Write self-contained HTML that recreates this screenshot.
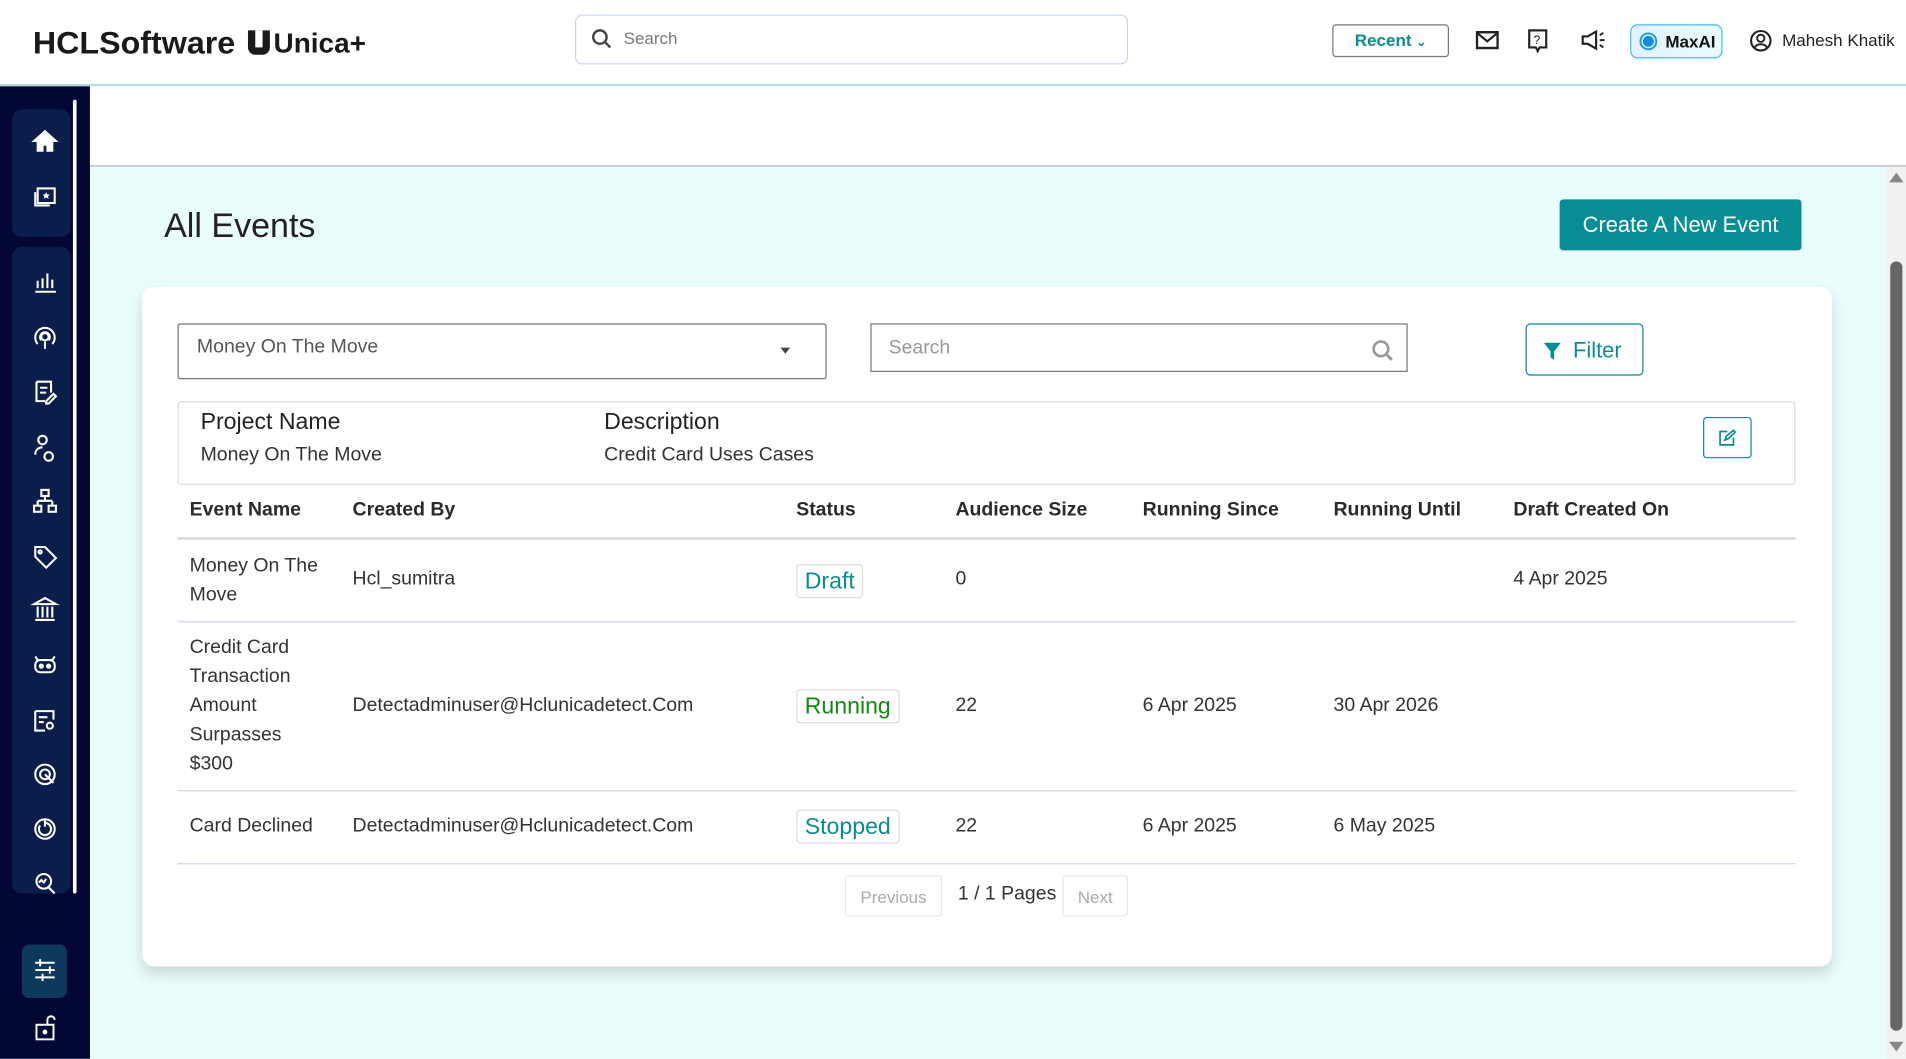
<!DOCTYPE html>
<html><head><meta charset="utf-8"><style>
*{box-sizing:border-box;margin:0;padding:0}
html,body{width:1906px;height:1059px;overflow:hidden;background:#e9fdfd;font-family:"Liberation Sans",sans-serif;color:#2b2b2b}
#w{position:absolute;left:0;top:0;width:1568px;height:871px;transform:scale(1.2156);transform-origin:0 0;background:#e9fdfd}
.a{position:absolute}
.hdr{left:0;top:0;width:1568px;height:71px;background:#fff;border-bottom:2px solid #b5dde0}
.side{left:0;top:71px;width:74px;height:800px;background:#020733}
.grp{background:#0b1d4a;border-radius:8px}
.th{position:absolute;top:411px;font-size:16px;font-weight:bold;color:#2a2a2a}
.td{position:absolute;font-size:16px;color:#333;line-height:24px}
.badge{position:absolute;border:1px solid #ddd;border-radius:3px;font-size:19px;padding:0 6px;height:28px;line-height:27px}
</style></head><body><div id="w">
<div class="a hdr"></div>
<div class="a" style="left:27px;top:20px;font-size:26px;font-weight:bold;letter-spacing:0;color:#1a1a1a;transform:scaleX(1.02);transform-origin:0 0">HCLSoftware</div>
<div class="a" style="left:204px;top:25px;width:18px;height:20px;border:3px solid #1a1a1a;border-radius:0 0 6px 6px;background:#1a1a1a"><div style="position:absolute;left:3px;top:-3px;width:6px;height:14px;background:#fff"></div></div>
<div class="a" style="left:225px;top:22px;font-size:23px;font-weight:bold;color:#1a1a1a">Unica+</div>
<div class="a" style="left:473px;top:12px;width:455px;height:41px;border:1px solid #c9d6ea;border-radius:6px"></div>
<svg class="a" style="left:486px;top:23px" width="18" height="18" viewBox="0 0 18 18"><circle cx="7.5" cy="7.5" r="5.5" fill="none" stroke="#444" stroke-width="2"/><path d="M11.5 11.5L16 16" stroke="#444" stroke-width="2"/></svg>
<div class="a" style="left:513px;top:23px;font-size:14px;color:#777">Search</div>
<div class="a" style="left:1096px;top:20px;width:96px;height:27px;border:1px solid #777;border-radius:3px;color:#078d94;font-weight:bold;font-size:14px;text-align:center;line-height:25px">Recent <span style="font-size:10px">&#8964;</span></div>
<svg class="a" style="left:1214px;top:25px" width="19" height="16"><rect x="1" y="1.5" width="17" height="13" fill="none" stroke="#222" stroke-width="2"/><path d="M1 2l8.5 7 8.5-7" fill="none" stroke="#222" stroke-width="1.8"/></svg>
<svg class="a" style="left:1257px;top:24px" width="16" height="20"><path d="M1 1h14v14H9.5L8 18 6.5 15H1z" fill="none" stroke="#222" stroke-width="1.8"/><text x="4.5" y="12" font-size="10" font-family="Liberation Sans" fill="#222">?</text></svg>
<svg class="a" style="left:1300px;top:24px" width="24" height="18"><path d="M2 6h4l7-4v14l-7-4H2z" fill="none" stroke="#222" stroke-width="1.8"/><path d="M16 5l3-2M16 9h4M16 13l3 2" stroke="#222" stroke-width="1.6"/></svg>
<div class="a" style="left:1341px;top:20px;width:76px;height:28px;border:1.5px solid #3bc0e8;border-radius:6px;background:linear-gradient(90deg,#e2f1ff,#eafcff)"></div>
<svg class="a" style="left:1348px;top:26px" width="16" height="16"><circle cx="8" cy="8" r="6.5" fill="none" stroke="#1a9be0" stroke-width="1.6"/><circle cx="8" cy="8" r="4.5" fill="#0a8fe0"/></svg>
<div class="a" style="left:1370px;top:26px;font-size:14px;font-weight:bold;color:#111">MaxAI</div>
<svg class="a" style="left:1439px;top:24px" width="19" height="19"><circle cx="9.5" cy="9.5" r="8" fill="none" stroke="#222" stroke-width="1.7"/><circle cx="9.5" cy="7.5" r="3" fill="none" stroke="#222" stroke-width="1.6"/><path d="M4.5 15c2-3.5 8-3.5 10 0" fill="none" stroke="#222" stroke-width="1.6"/></svg>
<div class="a" style="left:1466px;top:25px;font-size:14px;color:#222">Mahesh Khatik</div>

<div class="a side"></div>
<div class="a grp" style="left:10px;top:90px;width:48px;height:105px"></div>
<div class="a grp" style="left:10px;top:203px;width:48px;height:532px"></div>
<div class="a" style="left:60px;top:82px;width:3px;height:653px;background:#fff;border-radius:2px"></div>
<svg class="a" style="left:0;top:0" width="74" height="871" fill="none" stroke="#fff" stroke-width="1.7">
<path d="M28 116l9-8 9 8h-3v8h-4v-5h-4v5h-4v-8z" fill="#fff"/>
<rect x="31" y="155" width="14" height="12"/><path d="M29 158v11h12"/><path d="M38 158l1 2h2l-1.5 1.5.5 2-2-1-2 1 .5-2L35 160h2z" fill="#fff" stroke="none"/>
<path d="M29 240h17M31 237v-6M35 237v-8M39 237v-12M43 237v-7"/>
<circle cx="37" cy="277" r="3"/><path d="M31 283a8 8 0 1 1 12 0M34 280a4 4 0 1 1 6 0M37 281v6"/>
<path d="M30 314h12v9M30 314v16h7M33 319h6M33 323h5M38 330l6-6 2 2-6 6h-2z"/>
<circle cx="35" cy="362" r="3.5"/><path d="M29 374c0-5 4-6 6-6M40 372a3.5 3.5 0 1 0 .1 0"/>
<rect x="34" y="403" width="6" height="5"/><path d="M37 408v4M31 412h12M31 412v4M43 412v4"/><rect x="28" y="416" width="6" height="5"/><rect x="40" y="416" width="6" height="5"/>
<path d="M29 450h8l9 9-8 8-9-9z"/><circle cx="33" cy="454" r="1.3"/>
<path d="M28 497l9-5 9 5zM29 510h16M31 499v9M35 499v9M39 499v9M43 499v9"/>
<rect x="29" y="543" width="16" height="10" rx="4"/><circle cx="34" cy="548" r="1.3" fill="#fff"/><circle cx="40" cy="548" r="1.3" fill="#fff"/><path d="M31 543l-2-3M43 543l2-3"/>
<path d="M29 585h15v7M29 585v16h8M32 590h7M32 594h4"/><circle cx="41" cy="597" r="2.5"/>
<circle cx="37" cy="637" r="8"/><circle cx="37" cy="637" r="4"/><path d="M37 637l7 7"/>
<circle cx="37" cy="682" r="8"/><path d="M37 677a5 5 0 1 1-4 2M37 674v6"/>
<circle cx="36" cy="725" r="6"/><path d="M40 730l5 5M32 726l2-2 2 2 2-3"/>
</svg>
<div class="a" style="left:18px;top:777px;width:37px;height:44px;background:#0d3a5c;border-radius:6px"></div>
<svg class="a" style="left:0;top:0" width="74" height="871" fill="none" stroke="#fff" stroke-width="1.6">
<path d="M29 792h16M29 798h16M29 804h16M33 789v6M41 795v6M35 801v6"/>
<rect x="30" y="843" width="14" height="12"/><path d="M39 843v-4a3 3 0 0 1 6 0"/><circle cx="37" cy="849" r="1.2" fill="#fff"/>
</svg>

<div class="a" style="left:74px;top:71px;width:1494px;height:66px;background:#fff;border-bottom:1px solid #aab4ba"></div>
<div class="a" style="left:1552px;top:137px;width:16px;height:734px;background:#f1f1f1"></div>
<div class="a" style="left:1554px;top:142px;width:0;height:0;border-left:6px solid transparent;border-right:6px solid transparent;border-bottom:8px solid #888"></div>
<div class="a" style="left:1555px;top:215px;width:10px;height:633px;background:#666;border-radius:5px"></div>
<div class="a" style="left:1554px;top:857px;width:0;height:0;border-left:6px solid transparent;border-right:6px solid transparent;border-top:8px solid #888"></div>

<div class="a" style="left:135px;top:170px;font-size:28px;color:#222">All Events</div>
<div class="a" style="left:1283px;top:164px;width:199px;height:42px;background:#078d94;border-radius:3px;color:#fff;font-size:18px;text-align:center;line-height:42px">Create A New Event</div>

<div class="a" style="left:117px;top:236px;width:1390px;height:559px;background:#fff;border-radius:10px;box-shadow:0 6px 12px rgba(0,0,0,.15)"></div>
<div class="a" style="left:146px;top:266px;width:534px;height:46px;border:1px solid #777;border-radius:2px"></div>
<div class="a" style="left:162px;top:277px;font-size:16px;color:#555">Money On The Move</div>
<div class="a" style="left:642px;top:286px;border-left:4px solid transparent;border-right:4px solid transparent;border-top:5px solid #444"></div>
<div class="a" style="left:716px;top:266px;width:442px;height:40px;border:1px solid #777"></div>
<div class="a" style="left:731px;top:278px;font-size:16px;color:#999">Search</div>
<svg class="a" style="left:1128px;top:279px" width="19" height="19"><circle cx="8" cy="8" r="6" fill="none" stroke="#999" stroke-width="2.2"/><path d="M12.5 12.5L17 17" stroke="#999" stroke-width="2.4"/></svg>
<div class="a" style="left:1255px;top:266px;width:97px;height:43px;border:1px solid #078d94;border-radius:4px"></div>
<svg class="a" style="left:1269px;top:281px" width="16" height="16"><path d="M1 1h14l-5.5 7v7l-3-2V8z" fill="#078d94"/></svg>
<div class="a" style="left:1294px;top:278px;font-size:18px;color:#078d94">Filter</div>

<div class="a" style="left:146px;top:330px;width:1331px;height:69px;border:1px solid #ddd;border-radius:3px"></div>
<div class="a" style="left:165px;top:337px;font-size:19px;color:#222">Project Name</div>
<div class="a" style="left:165px;top:366px;font-size:16px;color:#333">Money On The Move</div>
<div class="a" style="left:497px;top:337px;font-size:19px;color:#222">Description</div>
<div class="a" style="left:497px;top:366px;font-size:16px;color:#333">Credit Card Uses Cases</div>
<div class="a" style="left:1401px;top:343px;width:40px;height:34px;border:1px solid #078d94;border-radius:3px"></div>
<svg class="a" style="left:1414px;top:353px" width="14" height="14" fill="none" stroke="#078d94" stroke-width="1.4"><path d="M7 2H1v11h11V7"/><path d="M5 9l1-3 6-5 1.5 1.5-6 5.5z"/></svg>

<div class="th" style="left:156px">Event Name</div>
<div class="th" style="left:290px">Created By</div>
<div class="th" style="left:655px">Status</div>
<div class="th" style="left:786px">Audience Size</div>
<div class="th" style="left:940px">Running Since</div>
<div class="th" style="left:1097px">Running Until</div>
<div class="th" style="left:1245px">Draft Created On</div>
<div class="a" style="left:146px;top:442px;width:1331px;height:2px;background:#d5d3e5"></div>

<div class="td" style="left:156px;top:454px">Money On The<br>Move</div>
<div class="td" style="left:290px;top:465px">Hcl_sumitra</div>
<div class="badge" style="left:655px;top:464px;color:#078d94">Draft</div>
<div class="td" style="left:786px;top:465px">0</div>
<div class="td" style="left:1245px;top:465px">4 Apr 2025</div>
<div class="a" style="left:146px;top:511px;width:1331px;height:1px;background:#d5d3e5"></div>

<div class="td" style="left:156px;top:521px">Credit Card<br>Transaction<br>Amount<br>Surpasses<br>$300</div>
<div class="td" style="left:290px;top:569px">Detectadminuser@Hclunicadetect.Com</div>
<div class="badge" style="left:655px;top:567px;color:#118a11">Running</div>
<div class="td" style="left:786px;top:569px">22</div>
<div class="td" style="left:940px;top:569px">6 Apr 2025</div>
<div class="td" style="left:1097px;top:569px">30 Apr 2026</div>
<div class="a" style="left:146px;top:650px;width:1331px;height:1px;background:#d5d3e5"></div>

<div class="td" style="left:156px;top:668px">Card Declined</div>
<div class="td" style="left:290px;top:668px">Detectadminuser@Hclunicadetect.Com</div>
<div class="badge" style="left:655px;top:666px;color:#078d94">Stopped</div>
<div class="td" style="left:786px;top:668px">22</div>
<div class="td" style="left:940px;top:668px">6 Apr 2025</div>
<div class="td" style="left:1097px;top:668px">6 May 2025</div>
<div class="a" style="left:146px;top:710px;width:1331px;height:1px;background:#d5d3e5"></div>

<div class="a" style="left:695px;top:720px;width:80px;height:34px;border:1px solid #e6e6e6;border-radius:3px;font-size:14px;color:#aaa;text-align:center;line-height:34px">Previous</div>
<div class="a" style="left:788px;top:727px;font-size:16px;color:#333">1 / 1 Pages</div>
<div class="a" style="left:874px;top:720px;width:54px;height:34px;border:1px solid #e6e6e6;border-radius:3px;font-size:14px;color:#aaa;text-align:center;line-height:34px">Next</div>
</div></body></html>
